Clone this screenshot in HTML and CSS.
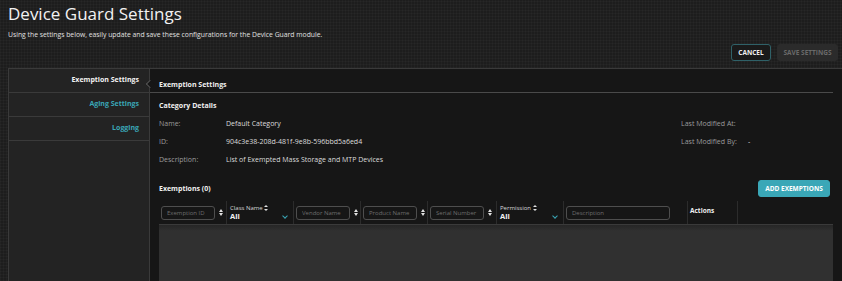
FILE: index.html
```html
<!DOCTYPE html>
<html lang="en">

<head>
    <meta charset="UTF-8">
    <meta name="viewport" content="width=device-width, initial-scale=1.0">
    <title>Device Guard Settings</title>
    <link rel="stylesheet" href="styles.css">
</head>

<body>

    <div class="page-header">
        <h1>Device Guard Settings</h1>
        <p class="subtitle">Using the settings below, easily update and save these configurations for the Device Guard module.</p>
        <div class="header-actions">
            <button class="btn btn-cancel">CANCEL</button>
            <button class="btn btn-save" disabled>SAVE SETTINGS</button>
        </div>
    </div>

    <div class="panel">
        <div class="sidebar">
            <div class="side-item active">Exemption Settings</div>
            <div class="side-item">Aging Settings</div>
            <div class="side-item">Logging</div>
        </div>

        <div class="main">
            <div class="main-title">Exemption Settings<span class="notch"></span></div>

            <div class="main-body">
                <div class="section-title">Category Details</div>

                <div class="details">
                    <span class="label">Name:</span>
                    <span class="value">Default Category</span>
                    <span class="label">Last Modified At:</span>
                    <span class="value"></span>

                    <span class="label">ID:</span>
                    <span class="value">904c3e38-208d-481f-9e8b-596bbd5a6ed4</span>
                    <span class="label">Last Modified By:</span>
                    <span class="value">-</span>

                    <span class="label">Description:</span>
                    <span class="value">List of Exempted Mass Storage and MTP Devices</span>
                    <span class="label"></span>
                    <span class="value"></span>
                </div>

                <div class="toolbar">
                    <span class="section-title">Exemptions (0)</span>
                    <button class="btn btn-add">ADD EXEMPTIONS</button>
                </div>

                <div class="grid-head">
                    <div class="cell"><input type="text" placeholder="Exemption ID"><span class="sort"></span></div>
                    <div class="cell select">
                        <span class="select-label">Class Name <span class="sort small"></span></span>
                        <span class="select-value">All</span>
                        <span class="chevron"></span>
                    </div>
                    <div class="cell"><input type="text" placeholder="Vendor Name"><span class="sort"></span></div>
                    <div class="cell"><input type="text" placeholder="Product Name"><span class="sort"></span></div>
                    <div class="cell"><input type="text" placeholder="Serial Number"><span class="sort"></span></div>
                    <div class="cell select">
                        <span class="select-label">Permission <span class="sort small"></span></span>
                        <span class="select-value">All</span>
                        <span class="chevron"></span>
                    </div>
                    <div class="cell"><input type="text" class="wide" placeholder="Description"></div>
                    <div class="cell"><span class="col-title">Actions</span></div>
                    <div class="cell"></div>
                </div>

                <div class="grid-body"></div>
            </div>
        </div>
    </div>

</body>

</html>
```

FILE: styles.css
```css
body {
    margin: 0;
    height: 281px;
    overflow: hidden;
    font-family: "Open Sans", "Liberation Sans", sans-serif;
    color: #e6e6e6;
    background-color: #1d1d1d;
    background-image:
        repeating-linear-gradient(0deg, rgba(255, 255, 255, 0.025) 0 1px, transparent 1px 3px),
        repeating-linear-gradient(90deg, rgba(255, 255, 255, 0.025) 0 1px, transparent 1px 3px);
    display: flex;
    flex-direction: column;
}

.page-header {
    flex: none;
    height: 68px;
    margin-left: 8px;
    padding-right: 4px;
    border-bottom: 1px solid #3a3a3a;
}

.page-header h1 {
    margin: 2px 0 0;
    font-size: 17px;
    font-weight: 400;
    line-height: 24px;
    color: #f2f2f2;
}

.subtitle {
    margin: 4px 0 0;
    font-size: 6.8px;
    line-height: 10px;
    color: #e0e0e0;
}

.header-actions {
    display: flex;
    justify-content: flex-end;
    gap: 6px;
    margin-top: 4px;
}

.btn {
    font-family: inherit;
    font-weight: 700;
    font-size: 6.5px;
    border-radius: 3px;
    padding: 0;
    white-space: nowrap;
    cursor: pointer;
}

.btn-cancel {
    height: 17px;
    width: 40px;
    background: #1a1a1a;
    border: 1px solid #2f6168;
    color: #f0f0f0;
}

.btn-save {
    height: 17px;
    width: 61px;
    background: #2b2b2b;
    border: 1px solid #2b2b2b;
    color: #6a6a6a;
}

.panel {
    flex: 1;
    min-height: 0;
    display: grid;
    grid-template-columns: 142px 1fr;
    margin-left: 8px;
    overflow: hidden;
}

.sidebar {
    background: #232323;
    border-left: 1px solid #3a3a3a;
    border-right: 1px solid #3a3a3a;
}

.side-item {
    height: 23px;
    border-bottom: 1px solid #3a3a3a;
    padding-right: 10px;
    text-align: right;
    font-size: 7px;
    font-weight: 700;
    line-height: 21px;
    color: #3aa6b6;
}

.side-item.active {
    color: #f2f2f2;
}

.main {
    background: #161616;
    position: relative;
}

.main-title {
    position: relative;
    margin-right: 9px;
    padding: 11px 0 2px 9px;
    line-height: 10px;
    font-size: 7px;
    font-weight: 700;
    color: #f0f0f0;
    border-bottom: 1px solid #4a4a4a;
}

.notch {
    position: absolute;
    left: -3px;
    top: 12px;
    width: 5px;
    height: 5px;
    background: #161616;
    border-left: 1px solid #555;
    border-bottom: 1px solid #555;
    transform: rotate(45deg);
}

.main-body {
    padding: 0 9px;
}

.section-title {
    font-size: 7px;
    font-weight: 700;
    color: #f0f0f0;
}

.main-body > .section-title {
    margin-top: 4px;
    line-height: 17px;
}

.details {
    display: grid;
    grid-template-columns: 67px 455px 67px 85px;
    grid-auto-rows: 18px;
    align-items: center;
    font-size: 7px;
}

.details .label {
    color: #9c9c9c;
}

.details .value {
    color: #dcdcdc;
}

.toolbar {
    display: flex;
    justify-content: space-between;
    align-items: center;
    margin-top: 12px;
    padding-right: 3px;
}

.btn-add {
    height: 17px;
    width: 72px;
    background: #3aa7b7;
    border: 1px solid #3aa7b7;
    color: #ffffff;
}

.grid-head {
    display: grid;
    grid-template-columns: 68px 67px 67px 67px 69px 67px 124px 50px 1fr;
    height: 23px;
    margin-top: 4px;
}

.cell {
    display: flex;
    align-items: center;
    padding: 0 2px;
    border-right: 1px solid #2c2c2c;
    position: relative;
}

.cell:last-child {
    border-right: none;
}

.cell input {
    width: 54px;
    height: 14px;
    box-sizing: border-box;
    background: transparent;
    border: 1px solid #4e4e4e;
    border-radius: 3px;
    padding: 0 5px;
    font-family: inherit;
    font-size: 6px;
    color: #ccc;
}

.cell input.wide {
    width: 104px;
}

.cell input::placeholder {
    color: #6e6e6e;
}

.sort {
    display: inline-block;
    position: relative;
    width: 4px;
    height: 7px;
    margin-left: 4px;
}

.sort::before,
.sort::after {
    content: "";
    position: absolute;
    left: 0;
    border-left: 2px solid transparent;
    border-right: 2px solid transparent;
}

.sort::before {
    top: 0;
    border-bottom: 3px solid #e0e0e0;
}

.sort::after {
    bottom: 0;
    border-top: 3px solid #e0e0e0;
}

.sort.small {
    height: 6px;
    margin-left: 0;
    vertical-align: -1px;
}

.sort.small::before {
    border-bottom-width: 2.5px;
}

.sort.small::after {
    border-top-width: 2.5px;
}

.cell.select {
    flex-direction: column;
    align-items: flex-start;
    justify-content: center;
    padding-left: 3px;
}

.select-label {
    font-size: 6px;
    line-height: 8px;
    color: #d8d8d8;
}

.select-value {
    font-size: 7.5px;
    font-weight: 700;
    line-height: 9px;
    color: #f2f2f2;
}

.chevron {
    position: absolute;
    right: 6px;
    bottom: 6px;
    width: 3px;
    height: 3px;
    border-right: 1px solid #3aa6b6;
    border-bottom: 1px solid #3aa6b6;
    transform: rotate(45deg);
}

.col-title {
    font-size: 6.5px;
    font-weight: 700;
    color: #f0f0f0;
    margin-bottom: 4px;
}

.grid-body {
    height: 60px;
    background: linear-gradient(#262626, #303030 6px, #303030);
    border-top: 1px solid #3a3a3a;
}
```
